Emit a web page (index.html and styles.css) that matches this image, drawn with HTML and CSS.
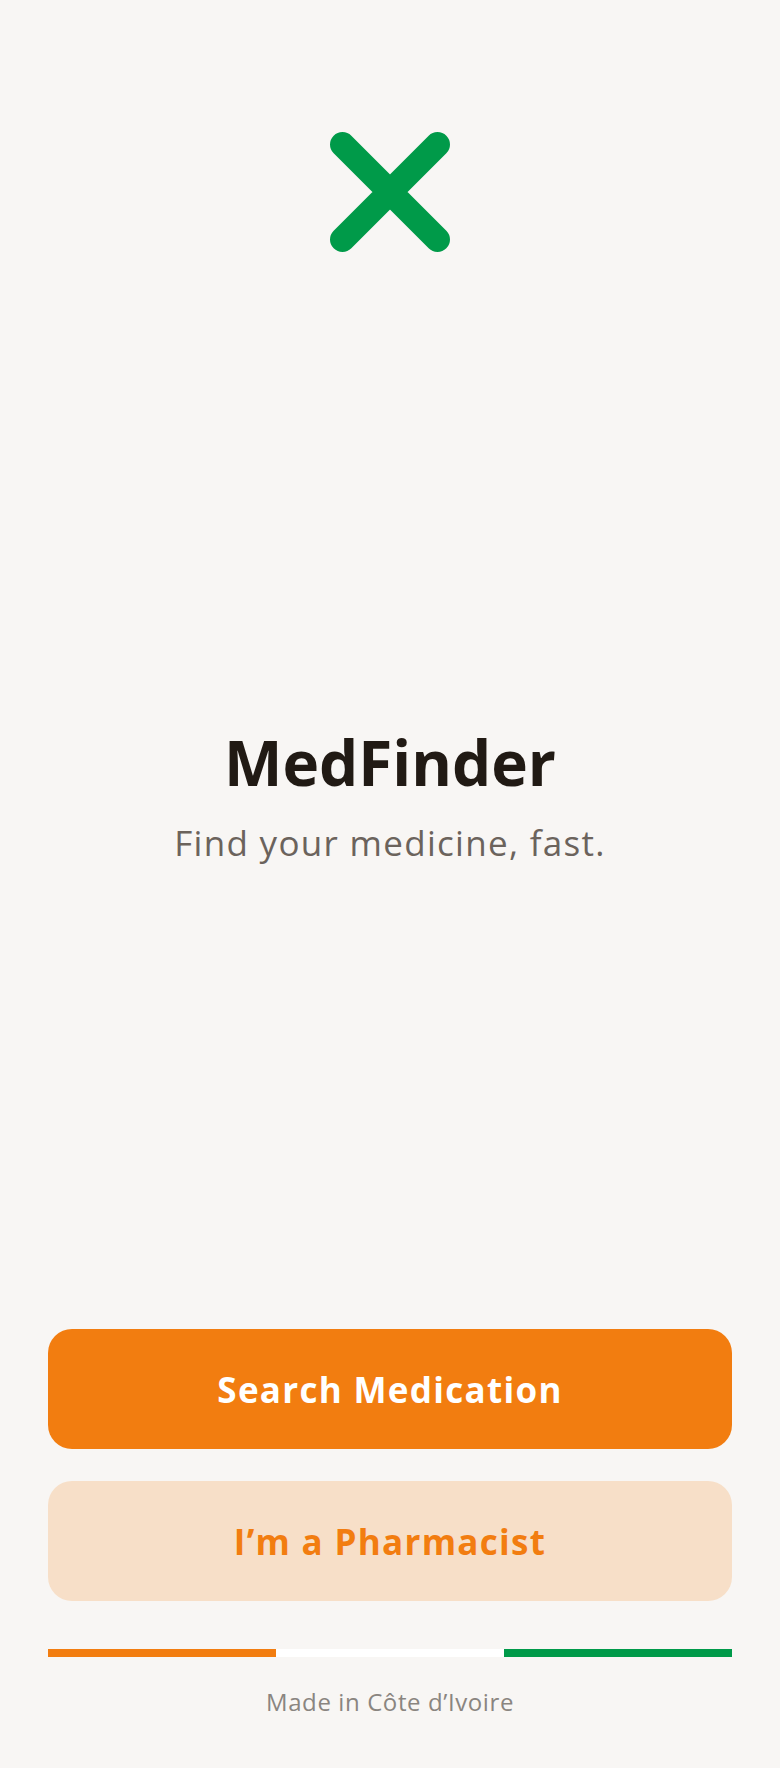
FILE: index.html
```html
<!DOCTYPE html>
<html lang="en">
<head>
<meta charset="utf-8">
<title>MedFinder</title>
<link rel="stylesheet" href="styles.css">
</head>
<body>
<main class="screen">
  <div class="logo">
    <svg width="120" height="120" viewBox="0 0 120 120" aria-hidden="true">
      <path d="M12.5 12.5 L107.5 107.5 M107.5 12.5 L12.5 107.5" stroke="#009a49" stroke-width="25" stroke-linecap="round" fill="none"/>
    </svg>
  </div>
  <section class="hero">
    <h1 class="title">MedFinder</h1>
    <p class="tagline">Find your medicine, fast.</p>
  </section>
  <div class="actions">
    <button class="btn btn-primary">Search Medication</button>
    <button class="btn btn-secondary">I’m a Pharmacist</button>
  </div>
  <div class="flag">
    <span class="flag-orange"></span>
    <span class="flag-white"></span>
    <span class="flag-green"></span>
  </div>
  <p class="footer">Made in Côte d’Ivoire</p>
</main>
</body>
</html>
```
FILE: styles.css
```css
* { box-sizing: border-box; }
html, body { margin: 0; padding: 0; }
body {
  background: #f8f6f4;
  font-family: "Open Sans", "Noto Sans", sans-serif;
}
.screen {
  min-height: 1768px;
  display: flex;
  flex-direction: column;
  padding: 132px 48px 0;
}
.logo {
  display: flex;
  justify-content: center;
  height: 120px;
}
.hero {
  margin-top: 474px;
  text-align: center;
}
.title {
  margin: 0;
  font-size: 62px;
  line-height: 72px;
  font-weight: 700;
  color: #211a14;
}
.tagline {
  margin: 23px 0 0;
  font-size: 35px;
  line-height: 44px;
  letter-spacing: 1.3px;
  color: #6b635c;
}
.actions {
  margin-top: auto;
  display: flex;
  flex-direction: column;
  gap: 32px;
}
.btn {
  height: 120px;
  border: none;
  border-radius: 24px;
  font-family: inherit;
  font-size: 35px;
  letter-spacing: 1.3px;
  font-weight: 700;
  cursor: pointer;
}
.btn-primary { background: #f27d10; color: #ffffff; }
.btn-secondary { background: #f7dfc8; color: #f27d10; }
.flag {
  margin-top: 48px;
  display: flex;
  height: 8px;
}
.flag span { flex: 1; }
.flag-orange { background: #f27d10; }
.flag-white { background: #ffffff; }
.flag-green { background: #009a49; }
.footer {
  margin: 30px 0 51px;
  text-align: center;
  font-size: 24px;
  line-height: 30px;
  letter-spacing: 0.6px;
  color: #8a8580;
}
```
